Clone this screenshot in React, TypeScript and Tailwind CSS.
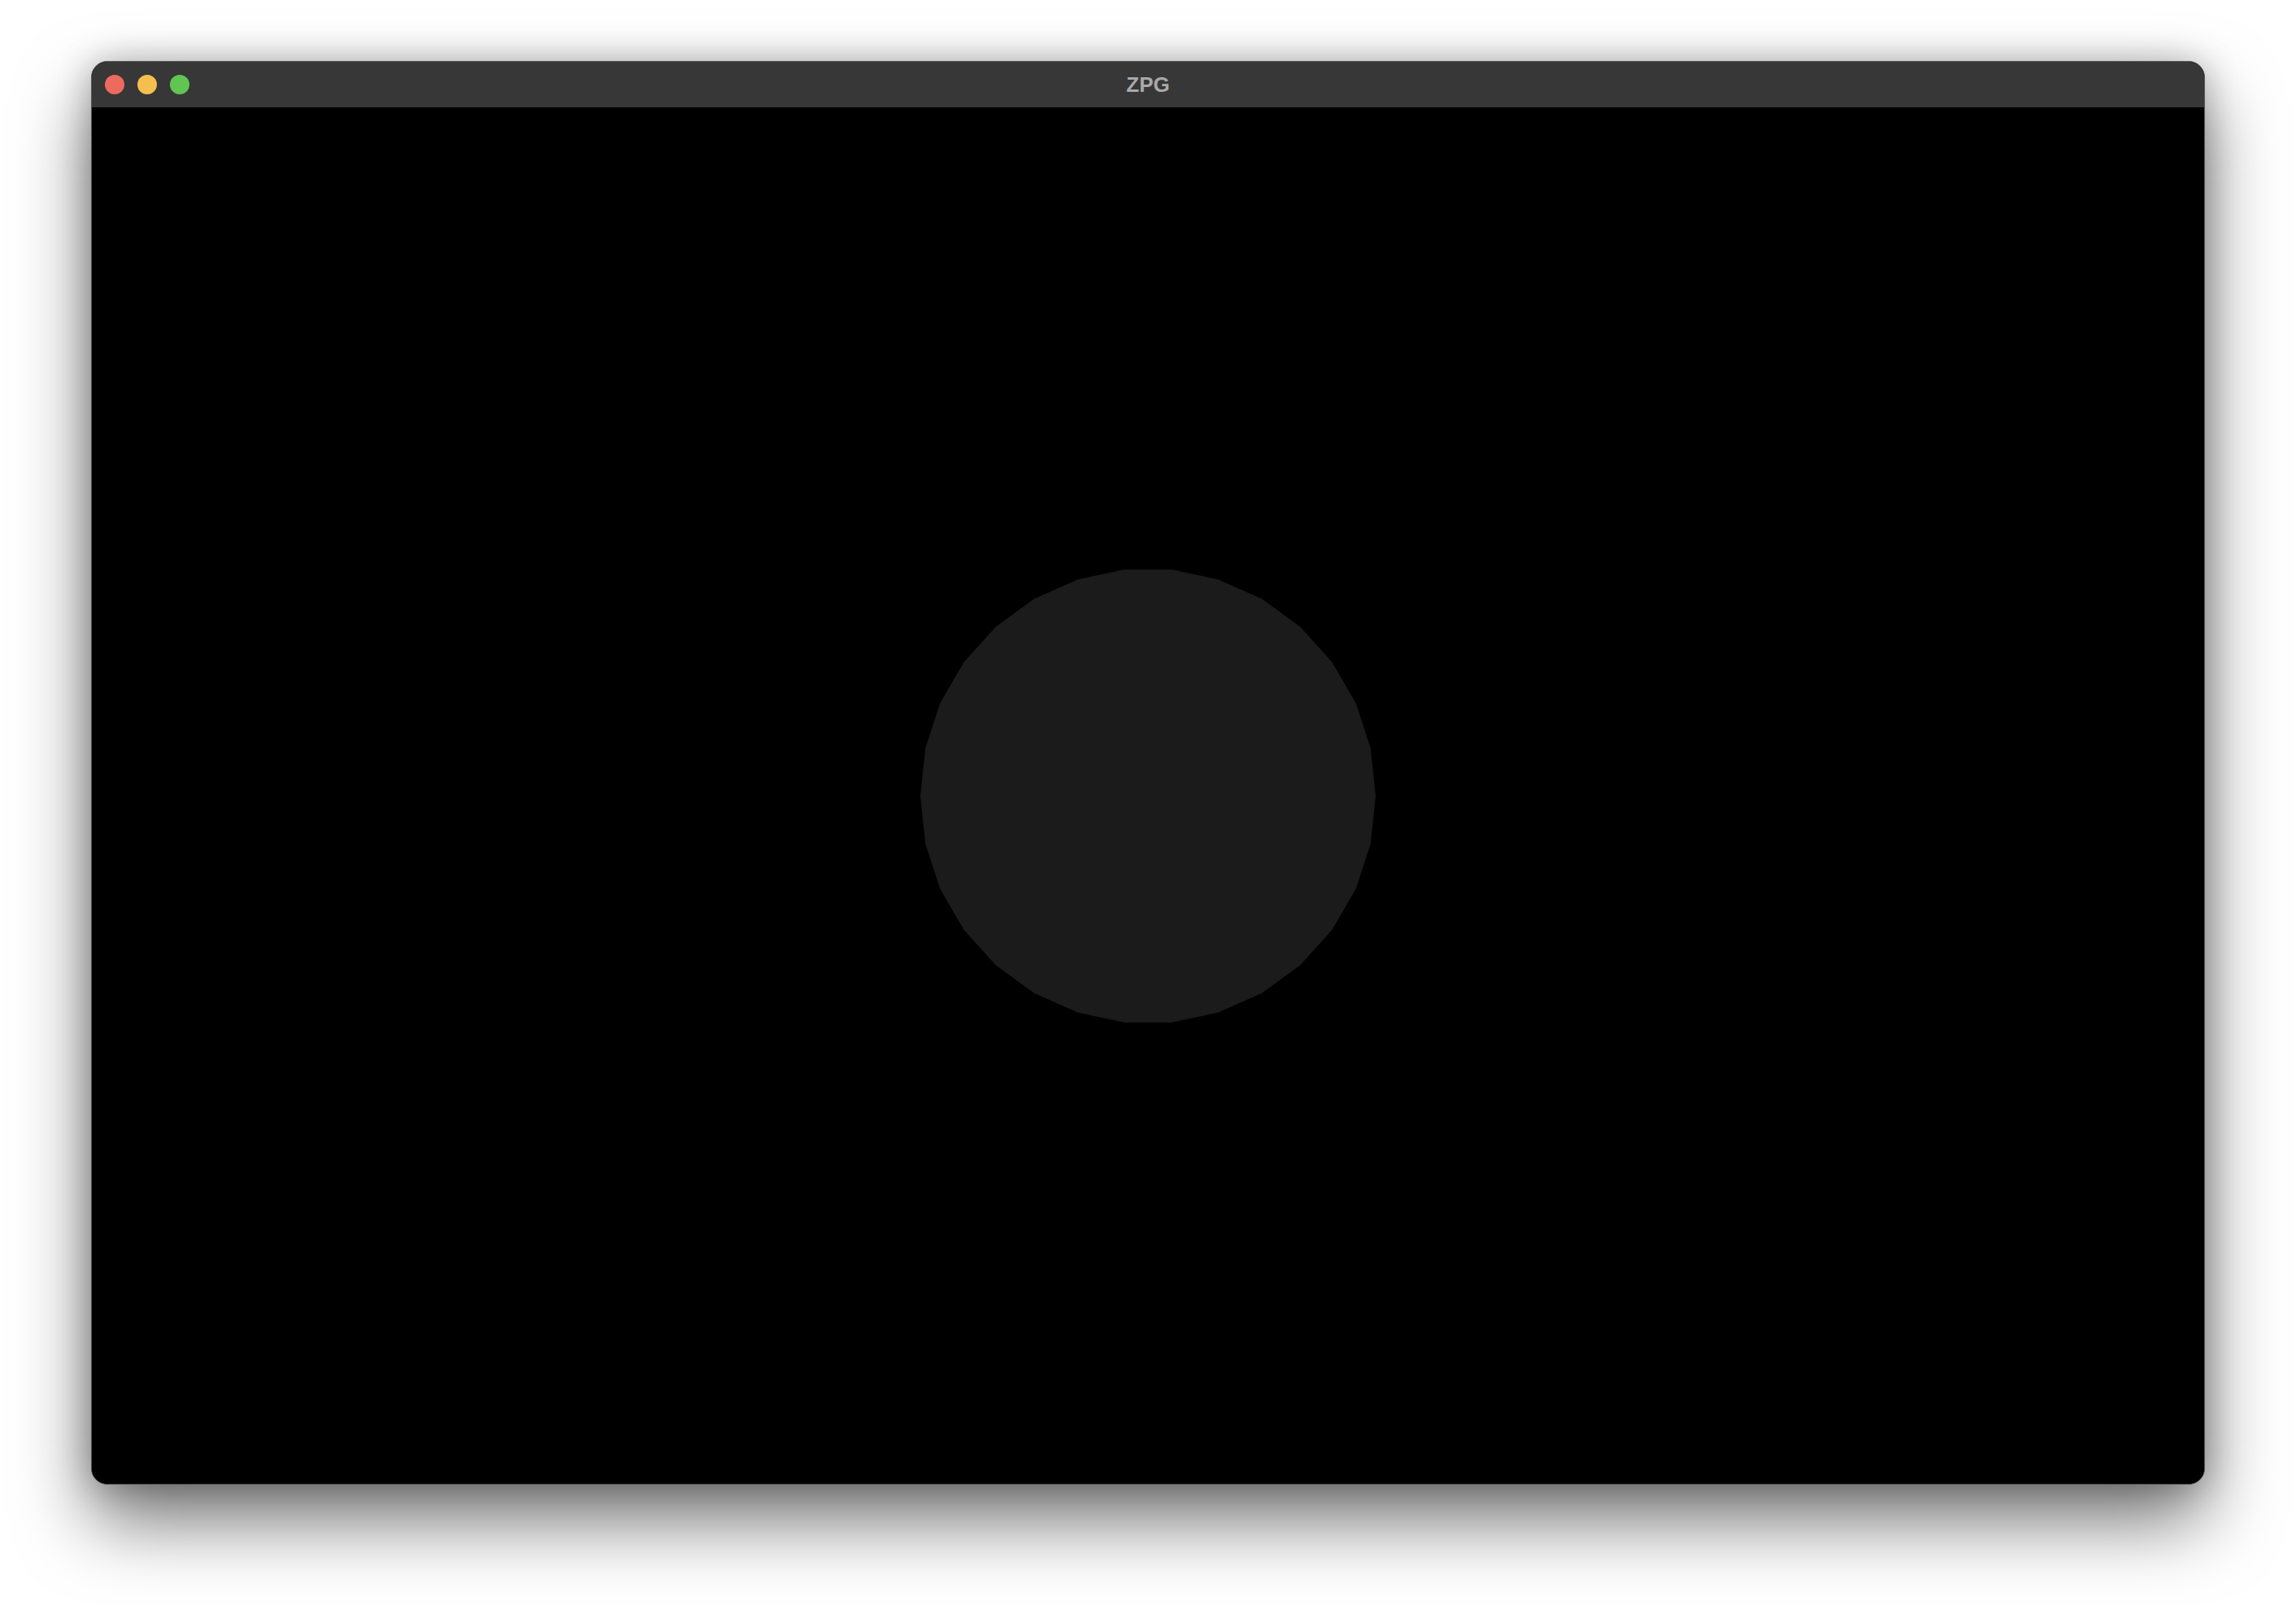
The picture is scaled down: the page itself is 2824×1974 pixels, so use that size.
import React from 'react';

// 30-sided polygon: pointed at left/right, flat edges on top/bottom, like the GL-rendered disc
const SIDES = 30;
const R = 280;
const points = Array.from({ length: SIDES }, (_, i) => {
  const a = (Math.PI * 2 * i) / SIDES;
  return `${(282 + R * Math.cos(a)).toFixed(2)},${(282 + R * Math.sin(a)).toFixed(2)}`;
}).join(' ');

const TrafficLights = () => (
  <div className="flex items-center gap-4 pl-4">
    <span className="block w-6 h-6 rounded-full bg-[#ed6a5e]" />
    <span className="block w-6 h-6 rounded-full bg-[#f5bf4f]" />
    <span className="block w-6 h-6 rounded-full bg-[#61c554]" />
  </div>
);

export default function App() {
  return (
    <div className="w-[2824px] h-[1974px] bg-white pt-[75px] pl-[112px]">
      <div className="w-[2600px] h-[1751px] flex flex-col rounded-[20px] overflow-hidden border border-[#555555] bg-black shadow-[0_44px_90px_rgba(0,0,0,0.55),0_0_40px_rgba(0,0,0,0.25)]">
        <div className="relative h-[56px] shrink-0 bg-[#373737] flex items-center">
          <TrafficLights />
          <div className="absolute inset-0 flex items-center justify-center pointer-events-none">
            <span
              className="text-[26px] font-bold text-[#a9a9a9] leading-none"
              style={{ fontFamily: '"Liberation Sans", Arial, sans-serif' }}
            >
              ZPG
            </span>
          </div>
        </div>
        <div className="flex-1 flex items-center justify-center bg-black">
          <svg width="564" height="564" viewBox="0 0 564 564">
            <polygon points={points} fill="#1b1b1b" />
          </svg>
        </div>
      </div>
    </div>
  );
}
